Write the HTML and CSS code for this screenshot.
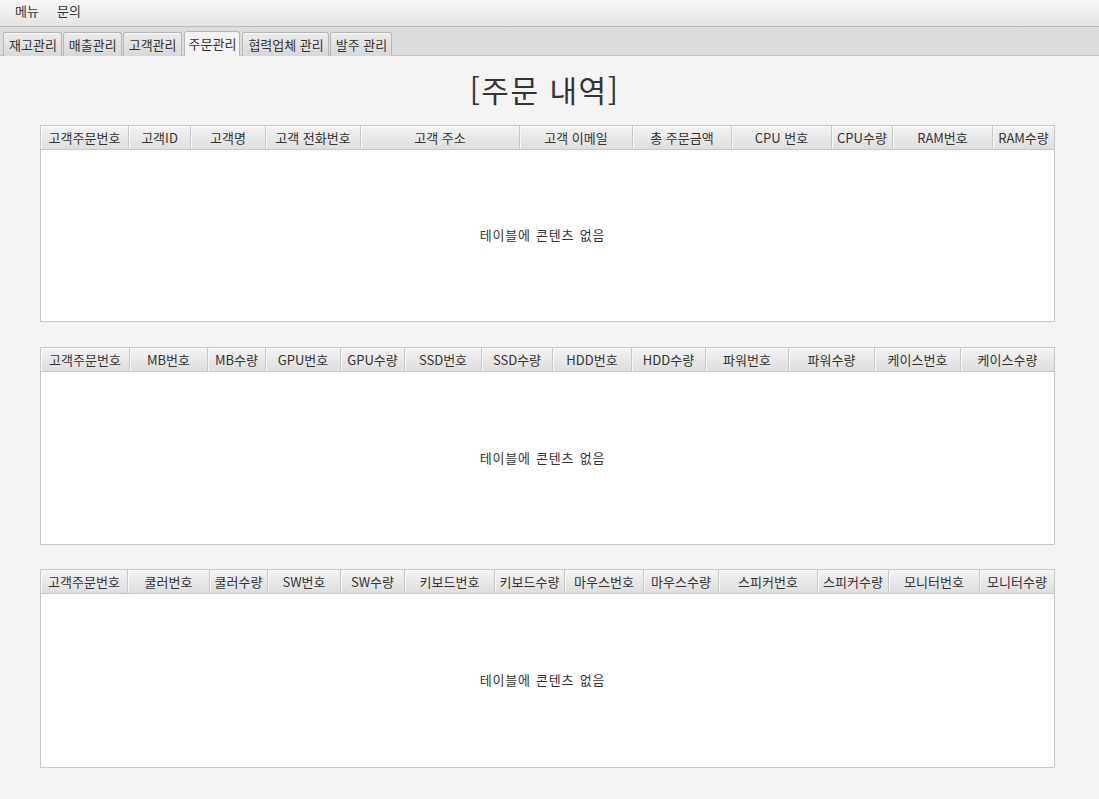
FILE: index.html
```html
<!DOCTYPE html>
<html lang="ko">
<head>
<meta charset="utf-8">
<link rel="stylesheet" href="styles.css">
<title>주문관리</title>
</head>
<body>
<div class="menubar">
  <span class="menu">메뉴</span>
  <span class="menu">문의</span>
</div>
<div class="tabbar">
  <div class="tab">재고관리</div>
  <div class="tab">매출관리</div>
  <div class="tab">고객관리</div>
  <div class="tab selected">주문관리</div>
  <div class="tab">협력업체 관리</div>
  <div class="tab">발주 관리</div>
</div>
<main class="content">
  <h1 class="title">[주문 내역]</h1>
  <section class="table t1">
    <div class="head">
      <div class="col" style="width:88px">고객주문번호</div>
      <div class="col" style="width:62px">고객ID</div>
      <div class="col" style="width:75px">고객명</div>
      <div class="col" style="width:95px">고객 전화번호</div>
      <div class="col" style="width:159px">고객 주소</div>
      <div class="col" style="width:113px">고객 이메일</div>
      <div class="col" style="width:99px">총 주문금액</div>
      <div class="col" style="width:100px">CPU 번호</div>
      <div class="col" style="width:61px">CPU수량</div>
      <div class="col" style="width:100px">RAM번호</div>
      <div class="col" style="width:61px">RAM수량</div>
    </div>
    <div class="body">테이블에 콘텐츠 없음</div>
  </section>
  <section class="table t2">
    <div class="head">
      <div class="col" style="width:89px">고객주문번호</div>
      <div class="col" style="width:78px">MB번호</div>
      <div class="col" style="width:58px">MB수량</div>
      <div class="col" style="width:75px">GPU번호</div>
      <div class="col" style="width:64px">GPU수량</div>
      <div class="col" style="width:77px">SSD번호</div>
      <div class="col" style="width:71px">SSD수량</div>
      <div class="col" style="width:79px">HDD번호</div>
      <div class="col" style="width:74px">HDD수량</div>
      <div class="col" style="width:83px">파워번호</div>
      <div class="col" style="width:86px">파워수량</div>
      <div class="col" style="width:86px">케이스번호</div>
      <div class="col" style="width:93px">케이스수량</div>
    </div>
    <div class="body">테이블에 콘텐츠 없음</div>
  </section>
  <section class="table t3">
    <div class="head">
      <div class="col" style="width:87px">고객주문번호</div>
      <div class="col" style="width:82px">쿨러번호</div>
      <div class="col" style="width:58px">쿨러수량</div>
      <div class="col" style="width:73px">SW번호</div>
      <div class="col" style="width:64px">SW수량</div>
      <div class="col" style="width:90px">키보드번호</div>
      <div class="col" style="width:70px">키보드수량</div>
      <div class="col" style="width:79px">마우스번호</div>
      <div class="col" style="width:75px">마우스수량</div>
      <div class="col" style="width:99px">스피커번호</div>
      <div class="col" style="width:71px">스피커수량</div>
      <div class="col" style="width:91px">모니터번호</div>
      <div class="col" style="width:74px">모니터수량</div>
    </div>
    <div class="body">테이블에 콘텐츠 없음</div>
  </section>
</main>
</body>
</html>
```

FILE: styles.css
```css
* { box-sizing: border-box; }
html, body { margin: 0; padding: 0; }
body {
  width: 1099px;
  height: 799px;
  overflow: hidden;
  background: #f4f4f4;
  font-family: "Noto Sans CJK KR", "Noto Sans", sans-serif;
  font-size: 13px;
  color: #333;
}
.menubar {
  height: 27px;
  background: linear-gradient(#f9f9f9, #e4e4e4);
  border-bottom: 1px solid #bcbcbc;
  display: flex;
  align-items: center;
  padding-left: 7px;
  padding-bottom: 4px;
}
.menu {
  padding: 0 8px;
  margin-right: 2px;
  line-height: 14px;
}
.tabbar {
  height: 29px;
  background: #dcdcdc;
  border-bottom: 1px solid #c4c4c4;
  display: flex;
  align-items: flex-end;
  padding-left: 3px;
  gap: 1px;
}
.tab {
  height: 24px;
  padding: 0 4px 0 5px;
  border: 1px solid #b6b6b6;
  border-bottom: none;
  border-radius: 3px 3px 0 0;
  background: linear-gradient(#ececec, #d8d8d8);
  box-shadow: inset 0 1px 0 #f8f8f8;
  display: flex;
  align-items: center;
  line-height: 14px;
  margin-bottom: -1px;
}
.tab.selected {
  background: #f4f4f4;
  box-shadow: none;
  height: 25px;
  padding: 0 3px 0 4px;
  margin: 0 1px -1px 1px;
}
.content {
  padding: 0 44px 0 40px;
}
.title {
  margin: 0;
  height: 69px;
  display: flex;
  align-items: center;
  justify-content: center;
  font-weight: normal;
  font-size: 30px;
  letter-spacing: 1.5px;
  padding-bottom: 3px;
  padding-right: 6px;
  color: #333;
}
.table {
  width: 1015px;
  border: 1px solid #c8c8c8;
  background: #fff;
  display: flex;
  flex-direction: column;
}
.t1 { height: 197px; }
.t2 { height: 198px; margin-top: 25px; }
.t3 { height: 199px; margin-top: 24px; }
.head {
  display: flex;
  height: 24px;
  flex: none;
  background: linear-gradient(#f4f4f4, #dedede);
  border-bottom: 1px solid #c8c8c8;
  overflow: hidden;
}
.col {
  flex: none;
  height: 100%;
  border-right: 1px solid #c8c8c8;
  box-shadow: inset 1px 1px 0 #f8f8f8;
  display: flex;
  align-items: center;
  justify-content: center;
  white-space: nowrap;
  overflow: hidden;
  line-height: 14px;
}
.col:last-child { border-right: none; }
.body {
  flex: 1;
  display: flex;
  align-items: center;
  justify-content: center;
  padding-bottom: 2px;
  padding-right: 10px;
  letter-spacing: 0.8px;
  word-spacing: 1px;
}
```
